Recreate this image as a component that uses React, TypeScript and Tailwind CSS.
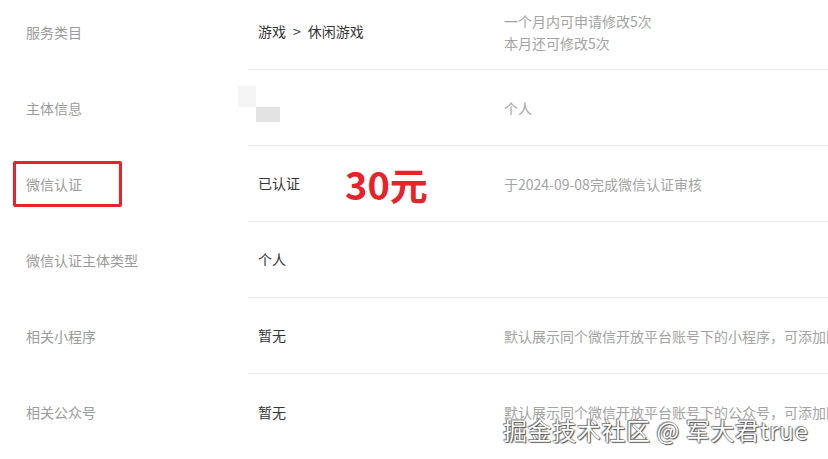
const rows = [
  {
    label: "服务类目",
    value: "游戏\u2002>\u2002休闲游戏",
    desc: ["一个月内可申请修改5次", "本月还可修改5次"],
  },
  { label: "主体信息", value: "masked", desc: ["个人"] },
  { label: "微信认证", value: "已认证", desc: ["于2024-09-08完成微信认证审核"], boxed: true, price: "30元" },
  { label: "微信认证主体类型", value: "个人", desc: [] },
  { label: "相关小程序", value: "暂无", desc: ["默认展示同个微信开放平台账号下的小程序，可添加因"] },
  { label: "相关公众号", value: "暂无", desc: ["默认展示同个微信开放平台账号下的公众号，可添加因"], last: true },
];

const App = () => {
  return (
    <div className="relative w-[828px] h-[459px] overflow-hidden bg-white text-[14px] font-['Microsoft_YaHei','Noto_Sans_CJK_SC',sans-serif]">
      <div className="-mt-[6px]">
        {rows.map((row) => (
          <div key={row.label} className="flex h-[76px]">
            <div className="w-[248px] shrink-0 flex items-center pl-[26px] text-[#9b9b9b]">
              {row.boxed ? (
                <div className="-ml-[13px] w-[109px] h-[46px] flex items-center pl-[10px] border-[3px] border-[#e5232a] rounded-[2px]">
                  {row.label}
                </div>
              ) : (
                row.label
              )}
            </div>
            <div
              className={`flex-1 min-w-0 flex items-center ${row.last ? "" : "border-b border-[#ebebeb]"}`}
            >
              <div className="w-[256px] shrink-0 pl-[10px] flex items-center text-[#353535]">
                {row.value === "masked" ? (
                  <div className="flex flex-col -mt-[8px]">
                    <div className="-ml-[20px] w-[18px] h-[21px] bg-[#f5f5f5]" />
                    <div className="-ml-[2px] w-[24px] h-[15px] bg-[#e3e3e3]" />
                  </div>
                ) : (
                  <span>{row.value}</span>
                )}
                {row.price && (
                  <span className="ml-[45px] text-[38px] leading-none font-bold text-[#e8222a]">
                    {row.price}
                  </span>
                )}
              </div>
              <div className="flex-1 min-w-0 overflow-hidden whitespace-nowrap text-[#a3a3a3] leading-[22px]">
                {row.desc.map((d) => (
                  <div key={d}>{d}</div>
                ))}
              </div>
            </div>
          </div>
        ))}
      </div>
      {/* watermark over the page */}
      <div className="absolute left-[503px] top-[414px] text-[24px] leading-[32px] tracking-[0.6px] text-white whitespace-nowrap [text-shadow:0_0_1px_#333,1px_1px_1px_#555,-1px_-1px_1px_#888]">
        掘金技术社区 @ 军大君true
      </div>
    </div>
  );
};

export default App;
